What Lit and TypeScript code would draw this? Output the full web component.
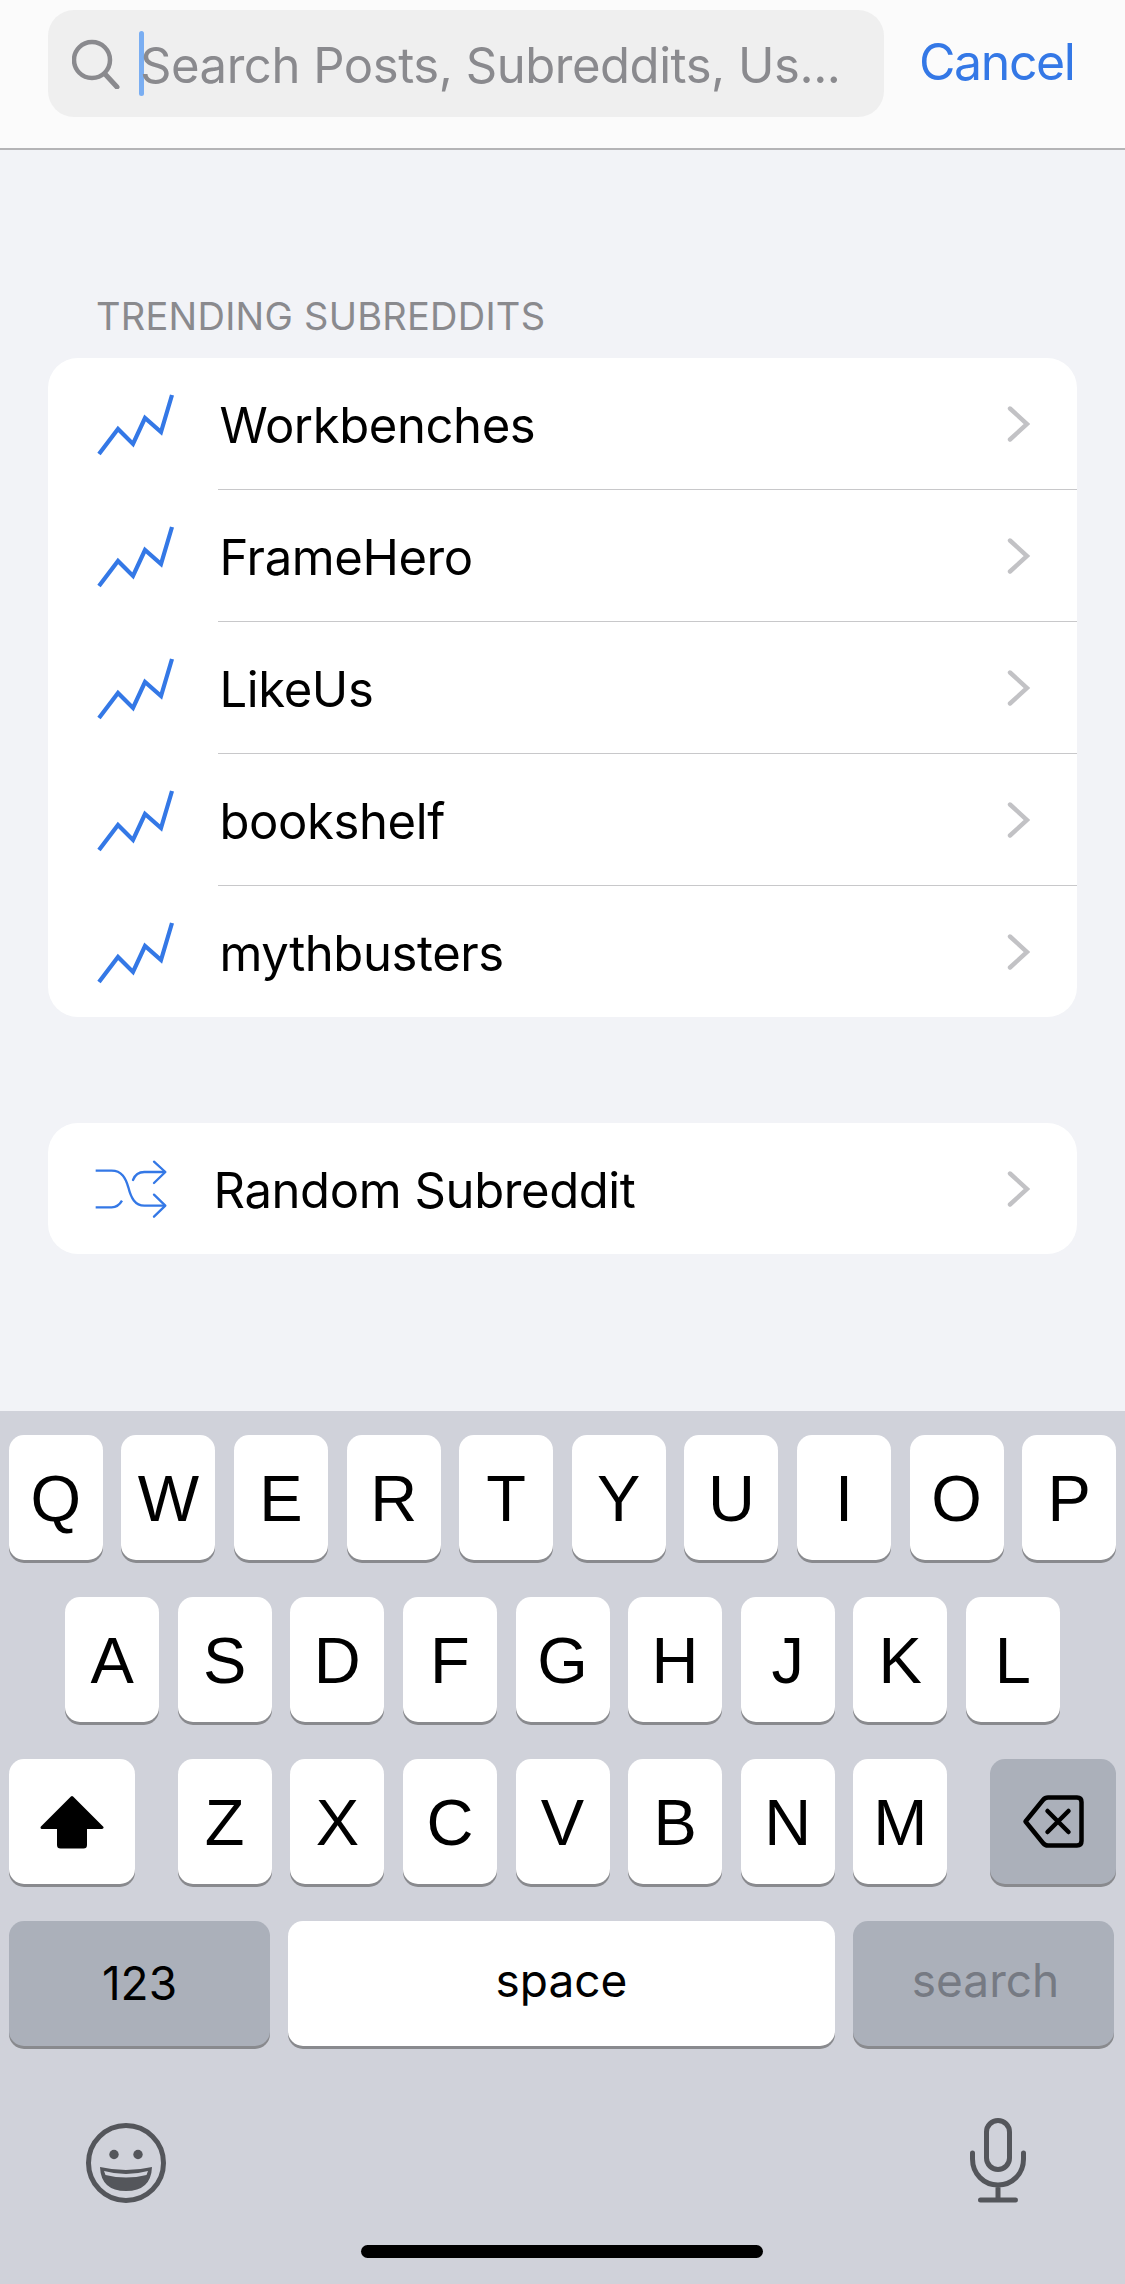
import { LitElement, css, html, svg } from "lit";
import { customElement } from "lit/decorators.js";

const TRENDING = ["Workbenches", "FrameHero", "LikeUs", "bookshelf", "mythbusters"];
const ROW_1 = ["Q", "W", "E", "R", "T", "Y", "U", "I", "O", "P"];
const ROW_2 = ["A", "S", "D", "F", "G", "H", "J", "K", "L"];
const ROW_3 = ["Z", "X", "C", "V", "B", "N", "M"];

const chevron = html`<svg class="chevron" width="24" height="36" viewBox="0 0 24 36">
  <path d="M3 2.5 L20 18 L3 33.5" fill="none" stroke="#c2c2c5" stroke-width="4.4" stroke-linecap="round" stroke-linejoin="miter" />
</svg>`;

const trendIcon = html`<svg class="trend" width="80" height="66" viewBox="0 0 80 66">
  <path d="M3 63 L22 38 L37 53 L49 27 L65 41 L76 4" fill="none" stroke="#3478e6" stroke-width="4.2" />
</svg>`;

const shuffleIcon = svg`<g fill="none" stroke="#3478e6" stroke-width="7" stroke-linecap="round" stroke-linejoin="round">
  <path d="M108 150 H156 C186 150 198 172 206 200 C214 232 226 255 254 255 H316" stroke-linecap="butt" />
  <path d="M108 260 H156 C170 260 180 252 187 240" stroke-linecap="butt" />
  <path d="M220 178 C226 162 236 154 254 154 H316" />
  <path d="M283 123 L317 154 L283 187" />
  <path d="M283 222 L317 255 L283 288" />
</g>`;

@customElement("app-root")
export class AppRoot extends LitElement {
  static styles = css`
    :host {
      display: flex;
      flex-direction: column;
      width: 1125px;
      height: 2284px;
      background: #f2f3f7;
      font-family: Inter, "Liberation Sans", sans-serif;
      overflow: hidden;
    }

    .top {
      height: 148px;
      flex: none;
      box-sizing: content-box;
      display: flex;
      align-items: flex-start;
      background: #fbfbfb;
      border-bottom: 2px solid #b4b4b6;
      padding-left: 48px;
    }
    .search {
      width: 836px;
      height: 107px;
      margin-top: 10px;
      background: #efefef;
      border-radius: 26px;
      display: flex;
      align-items: center;
      padding-left: 24px;
      box-sizing: border-box;
    }
    .caret {
      width: 5px;
      height: 65px;
      margin-left: 19px;
      border-radius: 3px;
      background: #7aaef2;
      margin-right: -4px;
      flex: none;
    }
    .placeholder {
      font-size: 49px;
      letter-spacing: -0.45px;
      color: #8a8a8e;
      white-space: nowrap;
      padding-top: 3px;
    }
    .cancel {
      margin: 34px 0 0 35px;
      font-size: 50px;
      line-height: 56px;
      letter-spacing: -1.4px;
      color: #3478e6;
    }

    .main {
      flex: 1;
      padding: 0 48px;
    }
    .label {
      margin: 146px 0 22px 48px;
      font-size: 38px;
      line-height: 40px;
      color: #8a8a8e;
      letter-spacing: 0.25px;
    }
    .card {
      background: #fff;
      border-radius: 30px;
      overflow: hidden;
    }
    .card.random {
      margin-top: 106px;
    }
    .row {
      display: flex;
      align-items: stretch;
      height: 132px;
      font-size: 49px;
      letter-spacing: -0.4px;
      color: #000;
    }
    .row:last-child {
      height: 131px;
    }
    .row span {
      padding-top: 3px;
      margin-left: 1.5px;
    }
    .slot {
      width: 170px;
      flex: none;
      display: flex;
      align-items: center;
      padding-left: 48px;
      box-sizing: border-box;
    }
    .slot.narrow {
      width: 164px;
      padding-left: 45px;
    }
    .body {
      flex: 1;
      display: flex;
      align-items: center;
      justify-content: space-between;
      padding-right: 46px;
      border-bottom: 1.5px solid #c8c8ca;
    }
    .row:last-child .body {
      border-bottom: 0;
    }

    .keyboard {
      flex: none;
      height: 873px;
      box-sizing: border-box;
      padding: 24px 9px 0;
      background: #d0d2da;
      display: flex;
      flex-direction: column;
      gap: 35px;
      position: relative;
    }
    .kb-row {
      display: flex;
      justify-content: center;
      gap: 18.6px;
    }
    .kb-row.spread {
      justify-content: space-between;
      gap: 0;
    }
    .kb-row.spread .letters {
      display: flex;
      gap: 18.6px;
    }
    .kb-row.last {
      padding-right: 2px;
    }
    .key {
      width: 94px;
      height: 125px;
      margin-bottom: 2px;
      background: #fff;
      border-radius: 15px;
      box-shadow: 0 3px 0 #898a8e;
      display: flex;
      align-items: center;
      justify-content: center;
      font-family: "Liberation Sans", Arial, sans-serif;
      font-size: 65px;
      color: #000;
      flex: none;
      box-sizing: border-box;
      padding-top: 2px;
    }
    .key.fn {
      background: #abb0ba;
    }
    .key.wide {
      width: 126px;
      padding-top: 0;
    }
    .key.bottom {
      width: 261px;
      font-family: Inter, "Liberation Sans", sans-serif;
      font-size: 46px;
      padding: 0 0 2px;
    }
    .key.space {
      width: 547px;
      font-family: Inter, "Liberation Sans", sans-serif;
      font-size: 46px;
      padding: 0 0 8px;
    }
    .key.go {
      color: #767a83;
      padding: 0 0 8px 4px;
    }

    .kb-extra {
      display: flex;
      justify-content: space-between;
      align-items: flex-start;
      padding: 32px 88px 0 75px;
    }
    .emoji {
      margin-top: 6px;
    }
    .mic {
      margin-top: 3px;
    }
    .home {
      position: absolute;
      left: 361px;
      bottom: 26px;
      width: 402px;
      height: 13px;
      border-radius: 7px;
      background: #000;
    }
  `;

  renderRow(name: string) {
    return html`<div class="row">
      <div class="slot">${trendIcon}</div>
      <div class="body"><span>${name}</span>${chevron}</div>
    </div>`;
  }

  renderKey(letter: string) {
    return html`<div class="key">${letter}</div>`;
  }

  render() {
    return html`
      <div class="top">
        <div class="search">
          <svg width="48" height="50" viewBox="0 0 48 50">
            <circle cx="20" cy="21" r="18" fill="none" stroke="#8a8a8e" stroke-width="4.5" />
            <path d="M33 35 L45 48" fill="none" stroke="#8a8a8e" stroke-width="5" stroke-linecap="round" />
          </svg>
          <div class="caret"></div>
          <div class="placeholder">Search Posts, Subreddits, Us...</div>
        </div>
        <div class="cancel">Cancel</div>
      </div>

      <div class="main">
        <div class="label">TRENDING SUBREDDITS</div>
        <div class="card">${TRENDING.map((name) => this.renderRow(name))}</div>
        <div class="card random">
          <div class="row">
            <div class="slot narrow">
              <svg width="75" height="60" viewBox="100 115 225 180">${shuffleIcon}</svg>
            </div>
            <div class="body"><span>Random Subreddit</span>${chevron}</div>
          </div>
        </div>
      </div>

      <div class="keyboard">
        <div class="kb-row">${ROW_1.map((k) => this.renderKey(k))}</div>
        <div class="kb-row">${ROW_2.map((k) => this.renderKey(k))}</div>
        <div class="kb-row spread">
          <div class="key wide">
            <svg width="64" height="56" viewBox="0 0 64 56">
              <path d="M32 3.5 L62 33.5 H45.5 V51 Q45.5 53 43.5 53 H20.5 Q18.5 53 18.5 51 V33.5 H2 Z" fill="#000" stroke="#000" stroke-width="3" stroke-linejoin="round" />
            </svg>
          </div>
          <div class="letters">${ROW_3.map((k) => this.renderKey(k))}</div>
          <div class="key wide fn">
            <svg width="62" height="53" viewBox="0 0 62 53">
              <path d="M3.5 26.5 L21 5 Q23 2.5 26 2.5 H55 Q59.5 2.5 59.5 7 V46 Q59.5 50.5 55 50.5 H26 Q23 50.5 21 48 Z" fill="none" stroke="#000" stroke-width="4.5" stroke-linejoin="round" />
              <path d="M25.5 16 L46.5 37 M46.5 16 L25.5 37" fill="none" stroke="#000" stroke-width="4.5" stroke-linecap="round" />
            </svg>
          </div>
        </div>
        <div class="kb-row spread last">
          <div class="key fn bottom">123</div>
          <div class="key space">space</div>
          <div class="key fn bottom go">search</div>
        </div>
        <div class="kb-extra">
          <svg class="emoji" width="84" height="84" viewBox="0 0 84 84">
            <circle cx="42" cy="42" r="37.5" fill="none" stroke="#54565b" stroke-width="5" />
            <circle cx="30" cy="33.5" r="4.7" fill="#54565b" />
            <circle cx="54" cy="33.5" r="4.7" fill="#54565b" />
            <path d="M16 46 Q42 52 68 46 Q67 70 42 70 Q17 70 16 46 Z M20 50 Q42 56 64 50 L62.5 54 Q42 59 21.5 54 Z" fill="#54565b" fill-rule="evenodd" />
          </svg>
          <svg class="mic" width="60" height="88" viewBox="0 0 60 88">
            <rect x="18.5" y="2.5" width="23" height="49" rx="11.5" fill="none" stroke="#54565b" stroke-width="5" />
            <path d="M4.5 35 V41 C4.5 56 16 67 30 67 C44 67 55.5 56 55.5 41 V35 M30 67 V82 M12.5 82 H47.5" fill="none" stroke="#54565b" stroke-width="5" stroke-linecap="round" />
          </svg>
        </div>
        <div class="home"></div>
      </div>
    `;
  }
}
